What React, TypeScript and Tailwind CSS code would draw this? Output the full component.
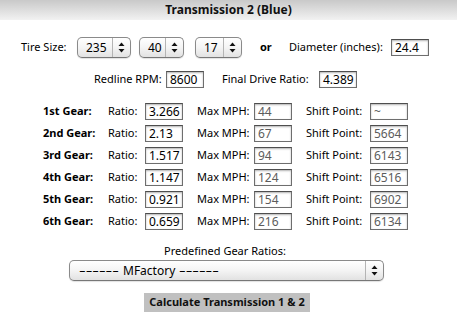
import React from 'react'

const font = { fontFamily: '"Noto Sans", "DejaVu Sans", sans-serif' }

function Arrows() {
  return (
    <svg width="7" height="11" viewBox="0 0 7 11" className="block">
      <path d="M3.5 0.5 L6.5 4 L0.5 4 Z" fill="#111" />
      <path d="M3.5 10.5 L6.5 7 L0.5 7 Z" fill="#111" />
    </svg>
  )
}

function PopUp({ value, className, children }: { value?: string; className: string; children?: React.ReactNode }) {
  return (
    <div
      className={`flex h-[21px] items-stretch rounded-[5px] border border-[#8a8a8a] border-b-[#777] bg-gradient-to-b from-[#ffffff] via-[#f4f4f4] to-[#e2e2e2] shadow-[0_1px_1px_rgba(0,0,0,0.12)] ${className}`}
    >
      <div className="flex flex-1 items-center pl-[8px] text-[12px] leading-none text-black">{children ?? value}</div>
      <div className="flex w-[18px] items-center justify-center border-l border-[#b4b4b4]">
        <Arrows />
      </div>
    </div>
  )
}

function Field({ value, muted }: { value: string; muted?: boolean }) {
  return (
    <div
      className={`flex h-[17px] w-[38px] items-center border border-[#6e6e6e] border-t-[#4e4e4e] bg-white pl-[3px] text-[12px] leading-none shadow-[inset_0_1px_2px_rgba(0,0,0,0.3)] ${
        muted ? 'text-[#5c5c5c]' : 'text-black'
      }`}
    >
      {value}
    </div>
  )
}

function Dashes() {
  return (
    <span className="inline-block w-[40px] overflow-visible whitespace-nowrap">
      <span className="inline-block origin-left scale-x-[1.72]">------</span>
    </span>
  )
}

const gears = [
  { name: '1st Gear:', ratio: '3.266', mph: '44', shift: '~' },
  { name: '2nd Gear:', ratio: '2.13', mph: '67', shift: '5664' },
  { name: '3rd Gear:', ratio: '1.517', mph: '94', shift: '6143' },
  { name: '4th Gear:', ratio: '1.147', mph: '124', shift: '6516' },
  { name: '5th Gear:', ratio: '0.921', mph: '154', shift: '6902' },
  { name: '6th Gear:', ratio: '0.659', mph: '216', shift: '6134' },
]

export default function App() {
  return (
    <div className="h-[324px] w-[457px] overflow-hidden bg-white text-[11px] text-black" style={font}>
      <div className="flex h-[20px] items-center justify-center bg-gradient-to-b from-[#c9c9c9] to-[#f2f2f2] text-[12px] font-bold text-[#111]">
        Transmission 2 (Blue)
      </div>

      <div className="mt-[17px] flex items-center pl-[21px]">
        <span className="w-[56px] whitespace-nowrap">Tire Size:</span>
        <PopUp value="235" className="w-[54px]" />
        <PopUp value="40" className="ml-[8px] w-[45px]" />
        <PopUp value="17" className="ml-[11px] w-[47px]" />
        <span className="ml-[18px] w-[29px] font-bold">or</span>
        <span className="w-[102px] whitespace-nowrap">Diameter (inches):</span>
        <Field value="24.4" />
      </div>

      <div className="mt-[13px] flex items-center pl-[94px]">
        <span className="w-[72px] whitespace-nowrap">Redline RPM:</span>
        <Field value="8600" />
        <span className="ml-[18px] w-[97px] whitespace-nowrap">Final Drive Ratio:</span>
        <Field value="4.389" />
      </div>

      <div className="mt-[15px] flex flex-col gap-[5px]">
        {gears.map((g) => (
          <div key={g.name} className="flex items-center pl-[43px]">
            <span className="w-[65px] whitespace-nowrap font-bold">{g.name}</span>
            <span className="w-[37px]">Ratio:</span>
            <Field value={g.ratio} />
            <span className="ml-[14px] w-[57px] whitespace-nowrap">Max MPH:</span>
            <Field value={g.mph} muted />
            <span className="ml-[14px] w-[64px] whitespace-nowrap">Shift Point:</span>
            <Field value={g.shift} muted />
          </div>
        ))}
      </div>

      <div className="mt-[14px] pl-[164px] leading-[14px]">Predefined Gear Ratios:</div>

      <div className="mt-[2px] pl-[69px]">
        <PopUp className="h-[19px] w-[315px]">
          <span className="flex items-center whitespace-nowrap pl-[1px]">
            <Dashes />
            <span className="px-[4px]">MFactory</span>
            <Dashes />
          </span>
        </PopUp>
      </div>

      <div className="mt-[12px] pl-[144px]">
        <div className="flex h-[19px] w-[166px] items-center justify-center bg-[#c0c0c0] text-[11px] font-bold text-[#111]">
          Calculate Transmission 1 &amp; 2
        </div>
      </div>
    </div>
  )
}
